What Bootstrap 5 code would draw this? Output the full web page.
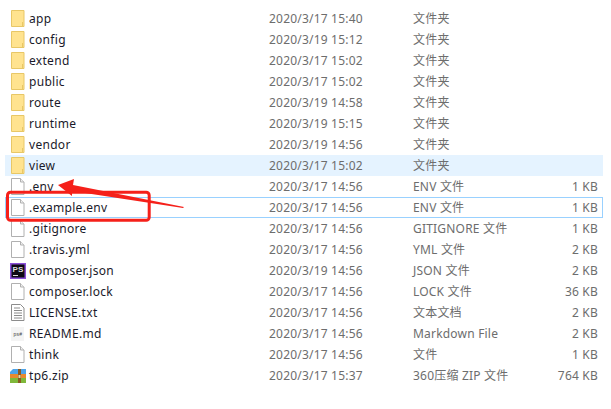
<!DOCTYPE html>
<html lang="en">
<head>
    <meta charset="UTF-8">
    <meta name="viewport" content="width=device-width, initial-scale=1.0">
    <title>tp6 folder</title>
    <link href="https://cdn.jsdelivr.net/npm/bootstrap@5.3.2/dist/css/bootstrap.min.css" rel="stylesheet"/>
    <style>
        body { background: #fff; overflow: hidden; font: 12px/17px "Noto Sans", "Noto Sans CJK SC", sans-serif; color: #6d6d6d; letter-spacing: .2px; }
        .file-list { padding: 8px 8px 0 5px; position: relative; }
        .file-row { height: 21px; display: grid; grid-template-columns: 23px 240px 144px 1fr 60px; align-items: center; border: 1px solid transparent; }
        .file-row > span:not(.file-icon) { padding-bottom: 1px; }
        .file-row.hovered { background: #e5f3ff; border-color: #e5f3ff; }
        .file-row.picked { border-color: #99d1ff; }
        .file-icon { display: flex; justify-content: center; }
        .file-row .file-name { color: #1a1a2a; letter-spacing: .3px; }
        .file-row .file-size { text-align: right; padding-right: 4px; }
        .markup { position: absolute; left: 0; top: 0; pointer-events: none; }
    </style>
</head>
<body>
    <!-- icons used by the rows -->
    <svg width="0" height="0" class="d-block">
        <defs>
            <symbol id="ic-folder" viewBox="0 0 14 17">
                <path d="M.5.5h12.500v16H.5z" fill="#ffe38f" stroke="#e8c766"/>
                <path d="M11.500 12v4" stroke="#e8c766"/>
            </symbol>
            <symbol id="ic-file" viewBox="0 0 14 17">
                <path d="M.5.5h9l3.500 3.500v12.500H.5z" fill="#fff" stroke="#b0b0b0"/>
                <path d="M9.500.5v3.500h3.500" fill="#eee" stroke="#b0b0b0"/>
            </symbol>
            <symbol id="ic-text" viewBox="0 0 14 17">
                <path d="M.5.5h9l3.500 3.500v12.500H.5z" fill="#fff" stroke="#8c8c8c"/>
                <path d="M3 4h6M3 6.500h8M3 9h8M3 11.500h8M3 14h8" stroke="#8c8c8c"/>
            </symbol>
        </defs>
    </svg>

    <div class="file-list" id="list"></div>

    <!-- red annotations drawn on top of the screenshot -->
    <svg class="markup" width="611" height="409">
        <rect x="7.500" y="192.200" width="141.700" height="28" rx="3" fill="none" stroke="#f5201a" stroke-width="3"/>
        <path d="M58 185L74 179L73 185L184 207L183 208L72 191L72 196z" fill="#f5201a"/>
    </svg>

    <script>
        var files = [
            ["folder", "app", "2020/3/17 15:40", "文件夹", ""],
            ["folder", "config", "2020/3/19 15:12", "文件夹", ""],
            ["folder", "extend", "2020/3/17 15:02", "文件夹", ""],
            ["folder", "public", "2020/3/17 15:02", "文件夹", ""],
            ["folder", "route", "2020/3/19 14:58", "文件夹", ""],
            ["folder", "runtime", "2020/3/19 15:15", "文件夹", ""],
            ["folder", "vendor", "2020/3/19 14:56", "文件夹", ""],
            ["folder", "view", "2020/3/17 15:02", "文件夹", "", "hovered"],
            ["file", ".env", "2020/3/17 14:56", "ENV 文件", "1 KB"],
            ["file", ".example.env", "2020/3/17 14:56", "ENV 文件", "1 KB", "picked"],
            ["file", ".gitignore", "2020/3/17 14:56", "GITIGNORE 文件", "1 KB"],
            ["file", ".travis.yml", "2020/3/17 14:56", "YML 文件", "2 KB"],
            ["ps", "composer.json", "2020/3/19 14:56", "JSON 文件", "2 KB"],
            ["file", "composer.lock", "2020/3/17 14:56", "LOCK 文件", "36 KB"],
            ["text", "LICENSE.txt", "2020/3/17 14:56", "文本文档", "2 KB"],
            ["md", "README.md", "2020/3/17 14:56", "Markdown File", "2 KB"],
            ["file", "think", "2020/3/17 14:56", "文件", "1 KB"],
            ["zip", "tp6.zip", "2020/3/17 15:37", "360压缩 ZIP 文件", "764 KB"]
        ];

        function iconFor(kind) {
            if (kind === "ps") {
                return '<svg width="16" height="16"><rect x=".75" y=".75" width="14.500" height="14.500" fill="#0d0a14" stroke="#8b4fd8" stroke-width="1.500"/><text x="2.500" y="9" font-size="8" font-weight="700" fill="#ddd" font-family="Liberation Sans">PS</text><path d="M3 12.500h5" stroke="#ddd"/></svg>';
            }
            if (kind === "zip") {
                return '<svg width="16" height="14"><path d="M0 3l3-3h13v5H0z" fill="#4da3e8"/><path d="M0 5h16v4H0z" fill="#e88a2e"/><path d="M0 9h16v5H0z" fill="#7fb83a"/><path d="M8 0h3v14H8z" fill="#8a5a22"/><path d="M8.500 6h2v3h-2z" fill="#e9d9a8"/></svg>';
            }
            if (kind === "md") {
                return '<svg width="14" height="16"><path d="M0 1h13v14H0z" fill="#f4f4f4"/><text x="2.500" y="10" font-size="5" fill="#444" font-family="Liberation Sans">ps#</text></svg>';
            }
            return '<svg width="14" height="17"><use href="#ic-' + kind + '"/></svg>';
        }

        var list = document.getElementById("list");
        files.forEach(function(f) {
            var row = document.createElement("div");
            row.className = "file-row " + (f[5] || "");
            row.innerHTML = '<span class="file-icon">' + iconFor(f[0]) + '</span>' +
                '<span class="file-name">' + f[1] + '</span>' +
                '<span>' + f[2] + '</span>' +
                '<span>' + f[3] + '</span>' +
                '<span class="file-size">' + f[4] + '</span>';
            list.appendChild(row);
        });
    </script>
    <script src="https://cdn.jsdelivr.net/npm/bootstrap@5.3.2/dist/js/bootstrap.bundle.min.js"></script>
</body>
</html>
